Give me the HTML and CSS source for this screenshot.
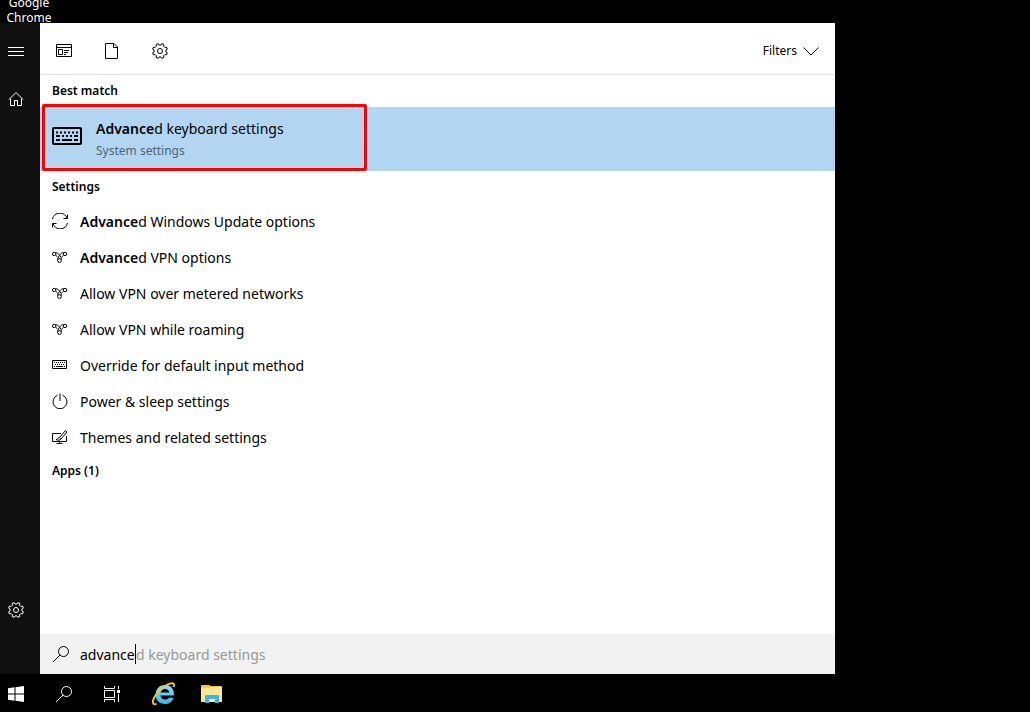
FILE: index.html
```html
<!DOCTYPE html>
<html lang="en">
<head>
    <meta charset="UTF-8">
    <meta name="viewport" content="width=device-width, initial-scale=1.0">
    <title>Search</title>
    <link rel="stylesheet" href="styles.css">
</head>
<body>
    <!-- Shared icons -->
    <svg class="icon-defs" aria-hidden="true">
        <symbol id="icon-gear" viewBox="-8 -8 16 16">
            <path d="M.94-5.93 1.84-7.37 3.91-6.51 3.53-4.85 4.85-3.53 6.51-3.91 7.37-1.84 5.93-.94V.94L7.37 1.84 6.51 3.91 4.85 3.53 3.53 4.85 3.91 6.51 1.84 7.37.94 5.93H-.94L-1.84 7.37-3.91 6.51-3.53 4.85-4.85 3.53-6.51 3.91-7.37 1.84-5.93.94V-.94L-7.37-1.84-6.51-3.91-4.85-3.53-3.53-4.85-3.91-6.51-1.84-7.37-.94-5.93Z"/>
            <circle r="2.5"/>
        </symbol>
        <symbol id="icon-search" viewBox="0 0 18 18">
            <circle cx="11.5" cy="6.5" r="5"/>
            <path d="M8 10 1 17"/>
        </symbol>
        <symbol id="icon-vpn" viewBox="0 0 16 16">
            <circle cx="2.200" cy="5" r="1.700"/>
            <circle cx="13" cy="5" r="1.700"/>
            <circle cx="7.500" cy="11.500" r="1.900"/>
            <path d="M3.500 3.700C5.500 3.500 6 4.500 7.500 6.200L9.200 8.500V10.500M11.700 3.700C9.500 3.300 8.700 5 7.800 6.200L5.800 9V10.500M3.800 6.300 5.600 8M11.500 6.300 9.600 8"/>
        </symbol>
    </svg>

    <main class="desktop">
        <span class="desktop-label">Google Chrome</span>

        <section class="search-menu">
            <nav class="sidebar">
                <button type="button" aria-label="Menu">
                    <svg class="icon" viewBox="0 0 16 16"><path d="M0 4.500H16M0 8.500H16M0 12.500H16"/></svg>
                </button>
                <button type="button" aria-label="Home">
                    <svg class="icon" viewBox="0 0 16 16"><path d="M1 8.500 8 1.500 15 8.500M2.500 7.500V14.500H6.500V9.500H9.500V14.500H13.500V7.500"/></svg>
                </button>
                <button type="button" class="sidebar-settings" aria-label="Settings">
                    <svg class="icon"><use href="#icon-gear"/></svg>
                </button>
            </nav>

            <div class="panel">
                <header class="toolbar">
                    <button type="button" aria-label="Apps">
                        <svg class="icon" viewBox="0 0 16 16"><path d="M.5 1.500H15.500V13.500H.5ZM.5 4.500H15.500M2.500 6.500H6.500V11.500H2.500ZM8 7.500H13M8 9.500H12M8 11.500H10"/></svg>
                    </button>
                    <button type="button" aria-label="Documents">
                        <svg class="icon" viewBox="0 0 16 16"><path d="M1.500.5H10L13.500 4V15.500H1.500ZM9.500.5V4.500H13.500"/></svg>
                    </button>
                    <button type="button" aria-label="Settings">
                        <svg class="icon"><use href="#icon-gear"/></svg>
                    </button>
                    <button type="button" class="filters">
                        Filters
                        <svg class="icon" viewBox="0 0 16 16"><path d="M.5 4.500 8 12 15.500 4.500"/></svg>
                    </button>
                </header>

                <div class="results">
                    <h2>Best match</h2>
                    <a href="#" class="best-match">
                        <svg class="icon-keyboard" viewBox="0 0 30 18">
                            <rect x="1" y="1" width="28" height="16" rx="1"/>
                            <path d="M4 5.500H26" stroke-dasharray="2 2"/>
                            <path d="M4 9H8M10 9H12M14 9H16M18 9H20M22 9H26M4 13H8M10 13H20M22 13H26"/>
                        </svg>
                        <span class="best-match-text">
                            <span class="best-match-title"><b>Advance</b>d keyboard settings</span>
                            <span class="best-match-type">System settings</span>
                        </span>
                    </a>

                    <h2>Settings</h2>
                    <ul>
                        <li><a href="#">
                            <svg class="icon" viewBox="0 0 16 16"><path d="M.5 6A7.500 7.500 0 0 1 15 5.500M15.500 1.500V5.500H11.500M15.500 10A7.500 7.500 0 0 1 1 10.500M.5 14.500V10.500H4.500"/></svg>
                            <span><b>Advance</b>d Windows Update options</span>
                        </a></li>
                        <li><a href="#">
                            <svg class="icon"><use href="#icon-vpn"/></svg>
                            <span><b>Advance</b>d VPN options</span>
                        </a></li>
                        <li><a href="#">
                            <svg class="icon"><use href="#icon-vpn"/></svg>
                            <span>Allow VPN over metered networks</span>
                        </a></li>
                        <li><a href="#">
                            <svg class="icon"><use href="#icon-vpn"/></svg>
                            <span>Allow VPN while roaming</span>
                        </a></li>
                        <li><a href="#">
                            <svg class="icon" viewBox="0 0 16 16"><path d="M.5 3.500H14.500V11.500H.5Z"/><path d="M2 5.500H13M3 7.500H13" stroke-dasharray="1 1"/><path d="M2 9.500H3M4 9.500H11M12 9.500H13"/></svg>
                            <span>Override for default input method</span>
                        </a></li>
                        <li><a href="#">
                            <svg class="icon" viewBox="0 0 16 16"><path d="M5.500 2.200A7 7 0 1 0 10.500 2.200M8 .5V8"/></svg>
                            <span>Power &amp; sleep settings</span>
                        </a></li>
                        <li><a href="#">
                            <svg class="icon" viewBox="0 0 16 16"><path d="M9 4.500H.5V12.500H14.500V7M7.500 13V15M4.500 14.500H10.500M7.500 8.500 13.500 1.500 15 3 9 10M7.500 8.500 9 10C8.500 11.500 6 11.500 4 10.500 6 10.500 5.500 8.500 7.500 8.500Z"/></svg>
                            <span>Themes and related settings</span>
                        </a></li>
                    </ul>

                    <h2>Apps (1)</h2>
                </div>

                <div class="search-box">
                    <label for="search-input" aria-label="Search">
                        <svg class="icon-search"><use href="#icon-search"/></svg>
                    </label>
                    <input type="text" id="search-input" value="advance" autocomplete="off">
                    <span class="suggestion">d keyboard settings</span>
                </div>
            </div>
        </section>
    </main>

    <footer class="taskbar">
        <button type="button" aria-label="Start">
            <svg class="icon icon-start" viewBox="0 0 16 16"><path d="M0 2.200 6.500 1.300V7.500H0ZM7.500 1.200 16 0V7.500H7.500ZM0 8.500H6.500V14.700L0 13.800ZM7.500 8.500H16V16L7.500 14.800Z"/></svg>
        </button>
        <button type="button" aria-label="Search">
            <svg class="icon-search"><use href="#icon-search"/></svg>
        </button>
        <button type="button" aria-label="Task view">
            <svg class="icon" viewBox="0 0 16 16"><path d="M.5 0V2.500H10.500V0M.5 4.500H10.500V11.500H.5ZM.5 16V13.500H10.500V16M14.500 0V3M14.500 8V16"/><path d="M13 4H16V7H13Z" fill="currentColor" stroke="none"/></svg>
        </button>
        <div class="pinned-apps">
            <button type="button" aria-label="Internet Explorer">
                <svg class="icon-app" viewBox="0 0 24 24">
                    <defs>
                        <linearGradient id="ie-blue" x1="0" y1="0" x2="0" y2="1">
                            <stop offset="0" stop-color="#8ee2fb"/>
                            <stop offset="1" stop-color="#35b2ea"/>
                        </linearGradient>
                    </defs>
                    <path d="M22 13.500H8.500C8.800 16 10.500 17.500 13 17.500 15 17.500 16.300 16.800 17 15.700H21.700C20.300 19.800 17 22 12.800 22 7.300 22 3.500 18.300 3.500 12.800 3.500 7.200 7.500 3 13 3S22.300 7 22 13.500ZM8.600 10.500H17.300C17 8.300 15.500 7 13 7S9 8.300 8.600 10.500Z" fill="url(#ie-blue)"/>
                    <path d="M4.500 21.500C1 24-1 20 3.500 13.500 8.500 6.500 16.500 1 20.500 1.300 22.500 1.500 22.300 3.500 21.500 5" fill="none" stroke="#f2c32e" stroke-width="2"/>
                </svg>
            </button>
            <button type="button" aria-label="File Explorer">
                <svg class="icon-app" viewBox="0 0 24 24">
                    <path d="M1 4Q1 3 2 3H9L11 4H21Q22 4 22 5V20H1Z" fill="#f5c84c"/>
                    <path d="M1 6H10L11 5H22V20H1Z" fill="#ffe694"/>
                    <path d="M5 21V14Q5 13 6 13H18Q19 13 19 14V21H15V17H9V21Z" fill="#3fb4e8"/>
                </svg>
            </button>
        </div>
    </footer>
</body>
</html>
```

FILE: styles.css
```css
*,
*::after {
    box-sizing: border-box;
}
body {
    font-family: "Noto Sans", "Open Sans", sans-serif;
    font-size: 14px;
    margin: 0;
    min-height: 100vh;
    display: flex;
    flex-direction: column;
    background-color: #000;
    color: #000;
}
button {
    display: flex;
    align-items: center;
    justify-content: center;
    padding: 0;
    border: none;
    background: none;
    color: inherit;
    font: inherit;
    cursor: pointer;
}
a {
    color: inherit;
    text-decoration: none;
}
b {
    font-weight: 600;
}
svg {
    flex: none;
    fill: none;
    stroke: currentColor;
}
.icon-defs {
    position: absolute;
    width: 0;
    height: 0;
}
.icon {
    width: 16px;
    height: 16px;
}
.icon-search {
    width: 18px;
    height: 18px;
}
.icon-app {
    width: 24px;
    height: 24px;
    stroke: none;
}
.icon-start {
    fill: #fff;
    stroke: none;
}

.desktop {
    position: relative;
    flex: 1;
    display: flex;
    padding-top: 23px;
}
.desktop-label {
    position: absolute;
    top: -5px;
    left: 0;
    width: 58px;
    color: #fff;
    font-size: 12px;
    line-height: 15px;
    text-align: center;
}
.search-menu {
    position: relative;
    display: flex;
    width: calc(100% - 195px);
}

.sidebar {
    display: flex;
    flex-direction: column;
    width: 40px;
    padding: 4px 0 40px;
    background-color: #101010;
    color: #fff;
}
.sidebar button {
    width: 32px;
    height: 48px;
}
.sidebar .sidebar-settings {
    margin-top: auto;
}

.panel {
    flex: 1;
    display: flex;
    flex-direction: column;
    background-color: #fff;
}
.toolbar {
    display: flex;
    height: 52px;
    padding-top: 4px;
    border-bottom: 1px solid #e1e1e1;
}
.toolbar button {
    width: 48px;
}
.toolbar .filters {
    width: auto;
    gap: 6px;
    margin-left: auto;
    padding-right: 16px;
    font-size: 12px;
}

.results {
    flex: 1;
}
.results h2 {
    margin: 0;
    padding-left: 12px;
    font-size: 12px;
    font-weight: 600;
    line-height: 32px;
}
.best-match {
    position: relative;
    display: flex;
    align-items: center;
    gap: 14px;
    height: 64px;
    padding: 0 12px;
    background-color: #b2d6f2;
}
/* highlight frame round the top result */
.best-match::after {
    content: "";
    position: absolute;
    top: -3px;
    left: 2px;
    width: 325px;
    height: 67px;
    border: 3px solid #f00;
    border-radius: 2px;
}
.icon-keyboard {
    width: 30px;
    height: 18px;
    margin-bottom: 6px;
    stroke-width: 2;
}
.best-match-text {
    display: flex;
    flex-direction: column;
    padding-top: 2px;
}
.best-match-title {
    line-height: 22px;
}
.best-match-type {
    color: #4f6475;
    font-size: 12px;
    line-height: 22px;
}
.results ul {
    margin: 0;
    padding: 0;
    list-style: none;
}
.results li a {
    display: flex;
    align-items: center;
    gap: 12px;
    height: 36px;
    padding-left: 12px;
}

.search-box {
    display: flex;
    align-items: center;
    height: 40px;
    padding-left: 12px;
    background-color: #f2f2f2;
}
.search-box label {
    display: flex;
    width: 28px;
}
/* right border stands in for the text caret */
.search-box input {
    width: 56px;
    height: 20px;
    padding: 0;
    border: none;
    border-right: 1px solid #000;
    outline: none;
    background: none;
    color: #000;
    font: inherit;
}
.suggestion {
    color: #999;
}

.taskbar {
    display: flex;
    height: 38px;
    padding-top: 2px;
    color: #fff;
}
.taskbar button {
    width: 48px;
}
.taskbar > button:first-child {
    width: 32px;
    margin-right: 8px;
}
.pinned-apps {
    display: flex;
    padding-left: 4px;
}
```
